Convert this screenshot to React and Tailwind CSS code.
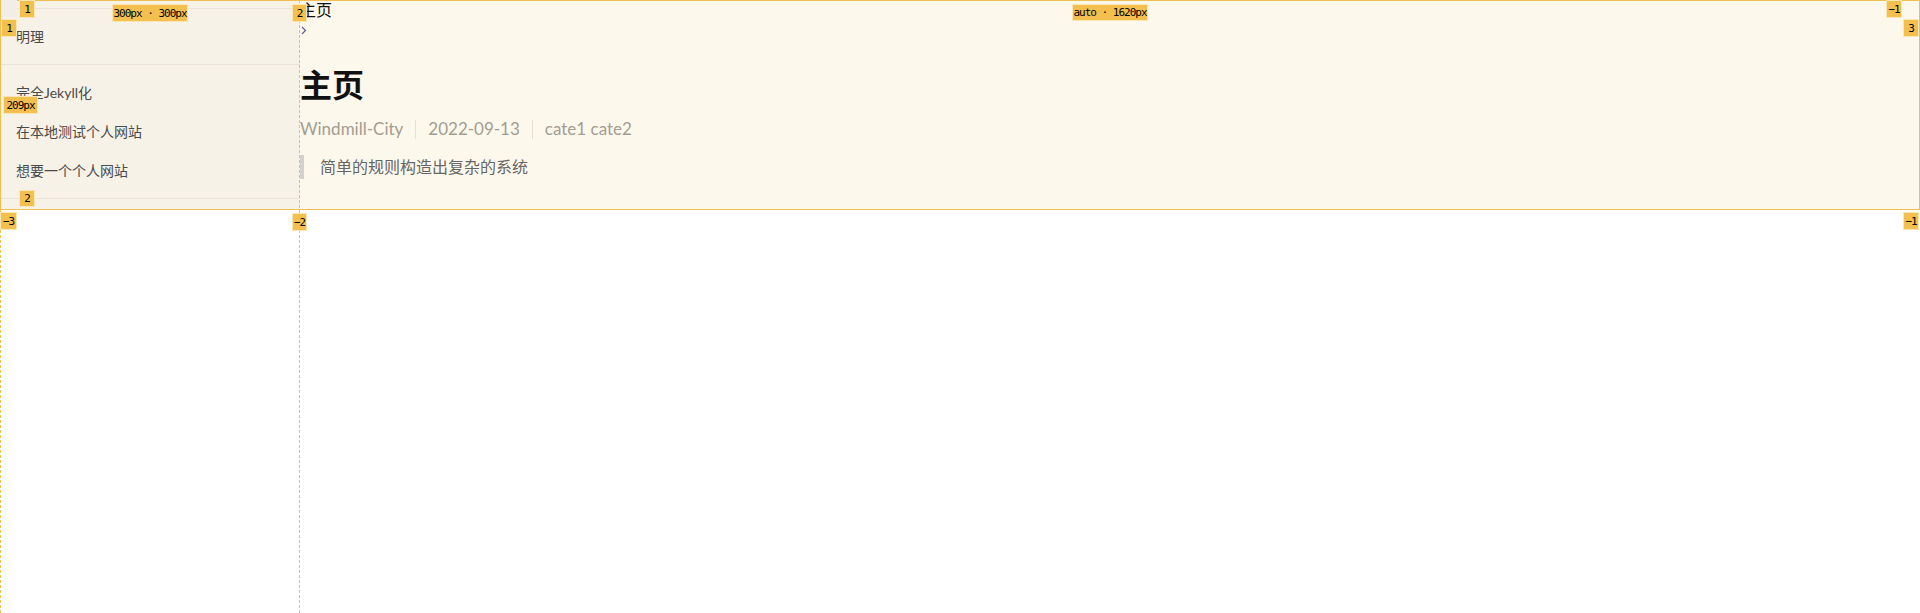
import React from 'react';

const cjk = { fontFamily: 'Lato, "Noto Sans CJK SC", sans-serif' };

const posts = ['完全Jekyll化', '在本地测试个人网站', '想要一个个人网站'];

const Badge = ({ className, children }) => (
  <div
    className={`absolute flex items-center justify-center whitespace-nowrap bg-[#f3c04f] border border-[#fbe7b4] text-black text-[11px] tracking-[-1px] leading-none font-['DejaVu_Sans_Mono',monospace] ${className}`}
  >
    {children}
  </div>
);

const Sidebar = () => (
  <aside className="bg-[#f6f2e8] overflow-hidden text-[14px] text-[#4a4a4a]" style={cjk}>
    <div className="h-[9px] border-b border-[#e8e3d6]" />
    <div className="h-[56px] flex items-center pl-4 border-b border-[#e8e3d6]">明理</div>
    <ul className="pt-[8px] pb-[8px] border-b border-[#e8e3d6]">
      {posts.map((p) => (
        <li key={p} className="h-[39px] flex items-center pl-4">
          {p}
        </li>
      ))}
    </ul>
  </aside>
);

const Main = () => (
  <main className="overflow-hidden flex flex-col" style={cjk}>
    <div className="h-[20px] leading-[20px] text-[16px] text-[#111]">主页</div>
    <div className="h-[20px] flex items-center">
      <svg width="6" height="9" viewBox="0 0 6 9" className="ml-[1px]">
        <path d="M1 1l3.5 3.5L1 8" fill="none" stroke="#5b5b9e" strokeWidth="1.2" />
      </svg>
    </div>
    <h1 className="mt-[25px] h-[40px] leading-[40px] text-[32px] font-bold text-[#111]">主页</h1>
    <div className="mt-[12px] h-[24px] flex items-center text-[17px] text-[#a39d92]">
      <span>Windmill-City</span>
      <span className="mx-[12px] w-px h-[19px] bg-[#e6e0d2]" />
      <span>2022-09-13</span>
      <span className="mx-[12px] w-px h-[19px] bg-[#e6e0d2]" />
      <span>cate1 cate2</span>
    </div>
    <blockquote className="mt-[14px] h-[24px] flex items-center border-l-4 border-[#d3d1cc] pl-4 text-[16px] text-[#666]">
      简单的规则构造出复杂的系统
    </blockquote>
  </main>
);

export default function App() {
  return (
    <div className="relative h-screen bg-white overflow-hidden">
      <div className="grid grid-cols-[300px_1fr] h-[210px] bg-[#fdf8ec]">
        <Sidebar />
        <Main />
      </div>

      {/* devtools grid overlay */}
      <div className="absolute left-0 top-0 w-full h-[210px] border border-[#f0bf52] pointer-events-none" />
      <div className="absolute left-[299px] top-0 h-full border-l border-dashed border-[#f0bf52]" />
      <div className="absolute left-0 top-[210px] bottom-0 border-l border-dashed border-[#f0bf52]" />
      <div className="absolute left-[1px] top-0 w-[16px] h-[17px] bg-[#f1eee6]" />

      <Badge className="left-[19px] top-0 w-[16px] h-[18px]">1</Badge>
      <Badge className="left-[1px] top-[19px] w-[16px] h-[18px]">1</Badge>
      <Badge className="left-[112px] top-[4px] w-[76px] h-[18px]">300px · 300px</Badge>
      <Badge className="left-[292px] top-[4px] w-[15px] h-[18px]">2</Badge>
      <Badge className="left-[3px] top-[96px] w-[35px] h-[18px]">209px</Badge>
      <Badge className="left-[19px] top-[190px] w-[16px] h-[17px]">2</Badge>
      <Badge className="left-0 top-[212px] w-[17px] h-[18px]">−3</Badge>
      <Badge className="left-[292px] top-[213px] w-[15px] h-[18px]">−2</Badge>
      <Badge className="left-[1072px] top-[4px] w-[76px] h-[17px]">auto · 1620px</Badge>
      <Badge className="left-[1886px] top-0 w-[16px] h-[18px]">−1</Badge>
      <Badge className="left-[1903px] top-[19px] w-[16px] h-[18px]">3</Badge>
      <Badge className="left-[1903px] top-[212px] w-[16px] h-[18px]">−1</Badge>
    </div>
  );
}
